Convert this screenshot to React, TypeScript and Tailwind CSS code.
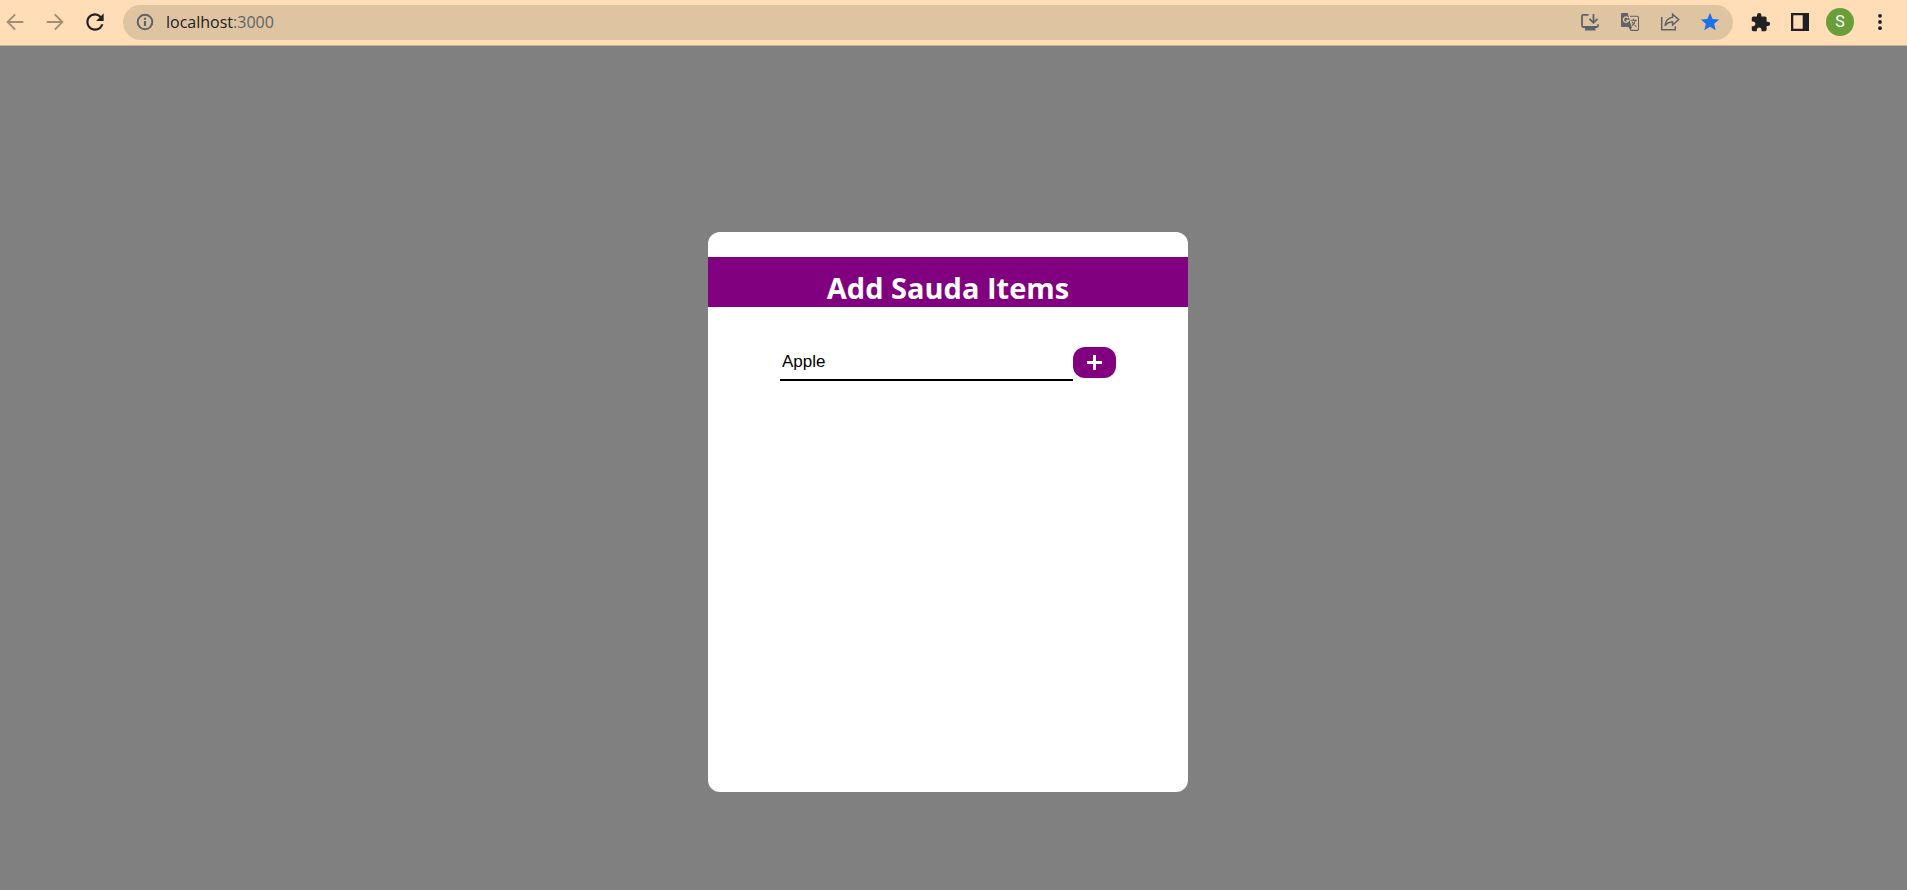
import { useState, type ReactNode } from "react";
import { MdExtension, MdRefresh, MdStar } from "react-icons/md";

function ToolButton({ label, className = "", children }: { label: string; className?: string; children: ReactNode }) {
  return (
    <button
      type="button"
      aria-label={label}
      className={`flex h-9 w-10 shrink-0 items-center justify-center ${className}`}
    >
      {children}
    </button>
  );
}

function BackIcon() {
  return (
    <svg width="18" height="18" viewBox="0 0 18 18" fill="none" stroke="currentColor" strokeWidth="1.9" aria-hidden="true">
      <path d="M17.3 9H2M9.2 1.3 1.6 9l7.6 7.7" />
    </svg>
  );
}

function ForwardIcon() {
  return (
    <svg width="18" height="18" viewBox="0 0 18 18" fill="none" stroke="currentColor" strokeWidth="1.9" aria-hidden="true">
      <path d="M.7 9H16M8.8 1.3 16.4 9l-7.6 7.7" />
    </svg>
  );
}

function InfoIcon() {
  return (
    <svg width="18" height="18" viewBox="0 0 18 18" className="shrink-0" fill="none" stroke="currentColor" strokeWidth="2" aria-hidden="true">
      <circle cx="9" cy="9" r="7.3" />
      <path d="M9 8v5M9 4.700v2" strokeWidth="2.200" />
    </svg>
  );
}

function InstallIcon() {
  return (
    <svg width="20" height="20" viewBox="0 0 20 20" fill="none" stroke="currentColor" strokeWidth="1.8" aria-hidden="true">
      <path d="M8.500 2.800H3.200Q2 2.800 2 4V13.800Q2 15 3.200 15H16.800Q18 15 18 13.800V12.200" />
      <path d="M13.500 2v8.500M9.500 6.800l4 4 4-4" />
      <path d="M5 15h10.500v3.500H5z" fill="currentColor" stroke="none" />
    </svg>
  );
}

function TranslateIcon() {
  return (
    <svg width="20" height="20" viewBox="0 0 20 20" fill="none" stroke="currentColor" aria-hidden="true">
      <path d="M10 4.200H17.300Q18.500 4.200 18.500 5.400V17.200Q18.500 18.400 17.300 18.400H10.500" strokeWidth="1.100" />
      <path d="M2.300 1H7.700L11.500 15H2.300Q1 15 1 13.700V2.300Q1 1 2.300 1Z" fill="currentColor" stroke="none" />
      <path d="M8.500 15 10.500 18.800 12 15Z" fill="currentColor" stroke="none" />
      <path d="M8.400 6.200A2.700 2.700 0 1 0 8.700 8.400H6.300" stroke="#dfc4a1" strokeWidth="1.400" />
      <path d="M10.500 8.200H16.800M13.500 6.800V8.200M15.600 8.200C15 10.800 13.500 12.500 11.700 13.800M12.200 9.700C13 11.600 14.500 13.300 16.200 14.700" strokeWidth="1.100" />
    </svg>
  );
}

function ShareIcon() {
  return (
    <svg width="20" height="20" viewBox="0 0 20 20" fill="none" stroke="currentColor" strokeWidth="1.5" aria-hidden="true">
      <path d="M1.700 5V17.800H15.300V14.200" />
      <path d="M12.600 2.200 18.700 7.600 12.600 13V10C8.900 10 6.700 11.200 5 13.800 5.600 9.400 8.200 5.900 12.600 5.300Z" />
    </svg>
  );
}

function SidePanelIcon() {
  return (
    <svg width="18" height="18" viewBox="0 0 18 18" aria-hidden="true">
      <path fill="currentColor" fillRule="evenodd" d="M0 0h18v18H0zM2.300 2.300v13.400h9.400V2.300z" />
    </svg>
  );
}

function MenuIcon() {
  return (
    <svg width="6" height="18" viewBox="0 0 6 18" fill="currentColor" aria-hidden="true">
      <circle cx="3" cy="2.800" r="1.900" />
      <circle cx="3" cy="9" r="1.900" />
      <circle cx="3" cy="15.200" r="1.900" />
    </svg>
  );
}

function BrowserBar() {
  return (
    <header className="flex h-[46px] w-full shrink-0 items-center border-b border-[#c9b093] bg-[#ffdeb7] pb-px pr-[7px] text-[#202124]">
      <nav aria-label="History" className="-ml-[5px] flex">
        <ToolButton label="Back" className="text-[#a18d76]"><BackIcon /></ToolButton>
        <ToolButton label="Forward" className="text-[#a18d76]"><ForwardIcon /></ToolButton>
        <ToolButton label="Reload"><MdRefresh size={26} /></ToolButton>
      </nav>
      <div className="ml-2 flex h-[35px] min-w-0 flex-1 items-center rounded-full bg-[#dfc4a1] pl-[13px] pr-[3px] text-[#5f6368]">
        <InfoIcon />
        <p className="ml-3 min-w-0 flex-1 truncate font-['Open_Sans','Noto_Sans',sans-serif] text-base leading-6">
          <span className="text-[#202124]">localhost</span>:3000
        </p>
        <ToolButton label="Install app"><InstallIcon /></ToolButton>
        <ToolButton label="Translate this page"><TranslateIcon /></ToolButton>
        <ToolButton label="Share this page"><ShareIcon /></ToolButton>
        <ToolButton label="Edit bookmark" className="text-[#1a73e8]"><MdStar size={22} /></ToolButton>
      </div>
      <div className="ml-[7px] flex">
        <ToolButton label="Extensions"><MdExtension size={21} /></ToolButton>
        <ToolButton label="Side panel"><SidePanelIcon /></ToolButton>
        <ToolButton label="Profile">
          <span className="flex size-7 items-center justify-center rounded-full bg-[#689f38] font-[Roboto,sans-serif] text-base text-white">S</span>
        </ToolButton>
        <ToolButton label="Menu"><MenuIcon /></ToolButton>
      </div>
    </header>
  );
}

export default function App() {
  const [item, setItem] = useState("Apple");
  return (
    <div className="flex min-h-screen flex-col bg-[#808080]">
      <BrowserBar />
      <main className="flex flex-1 justify-center pb-8 pr-[11px] pt-[186px]">
        <section className="h-[560px] w-full max-w-[480px] rounded-xl bg-white pt-[25px]">
          <h1 className="h-[50px] bg-[#800080] pt-[11px] text-center font-['Open_Sans','Noto_Sans',sans-serif] text-[29px] font-bold leading-10 text-white">
            Add Sauda Items
          </h1>
          <form className="mx-[72px] mt-10 flex items-start" onSubmit={(e) => e.preventDefault()}>
            <input
              type="text"
              aria-label="Item"
              value={item}
              onChange={(e) => setItem(e.target.value)}
              className="h-[34px] w-[293px] min-w-0 border-b-2 border-black px-0.5 pb-0.5 font-['Liberation_Sans',Arial,sans-serif] text-[17px] text-black outline-none"
            />
            <button type="submit" aria-label="Add item" className="flex h-[31px] w-[43px] shrink-0 items-center justify-center rounded-xl bg-[#800080] text-white">
              <svg width="15" height="15" viewBox="0 0 15 15" stroke="currentColor" strokeWidth="3" aria-hidden="true">
                <path d="M7.500 0v15M0 7.500h15" />
              </svg>
            </button>
          </form>
        </section>
      </main>
    </div>
  );
}
